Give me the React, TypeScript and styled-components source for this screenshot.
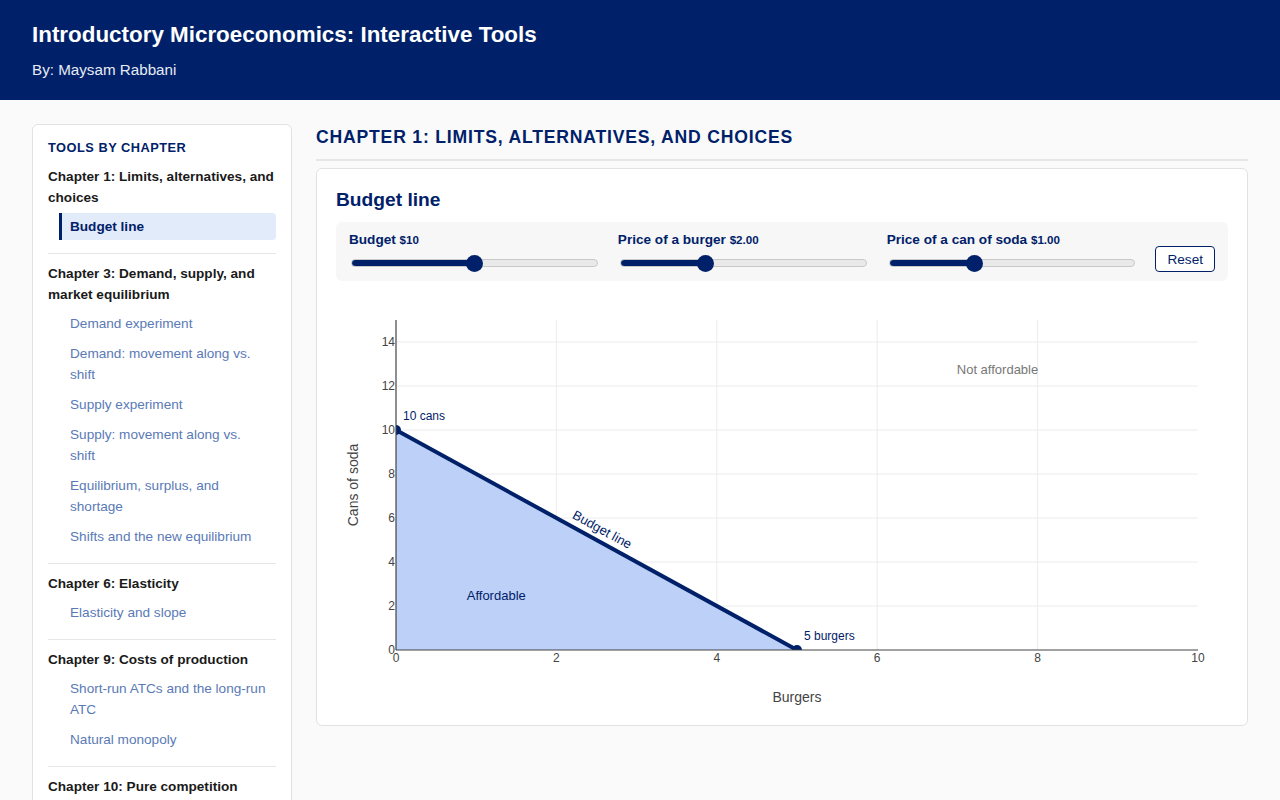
import React, { useState } from "react";
import styled, { createGlobalStyle } from "styled-components";

const NAVY = "#002169";

const GlobalStyle = createGlobalStyle`
  html, body {
    margin: 0;
    padding: 0;
    background: #fafafa;
    font-family: "Liberation Sans", Arial, sans-serif;
    color: #1a1a1a;
  }
  * { box-sizing: border-box; }
`;

const chapters = [
  {
    title: "Chapter 1: Limits, alternatives, and choices",
    tools: ["Budget line"],
  },
  {
    title: "Chapter 3: Demand, supply, and market equilibrium",
    tools: [
      "Demand experiment",
      "Demand: movement along vs. shift",
      "Supply experiment",
      "Supply: movement along vs. shift",
      "Equilibrium, surplus, and shortage",
      "Shifts and the new equilibrium",
    ],
  },
  { title: "Chapter 6: Elasticity", tools: ["Elasticity and slope"] },
  {
    title: "Chapter 9: Costs of production",
    tools: ["Short-run ATCs and the long-run ATC", "Natural monopoly"],
  },
  {
    title: "Chapter 10: Pure competition",
    tools: ["Profit maximization", "Short-run supply"],
  },
];

const DEFAULTS = { budget: 10, burger: 2, soda: 1 };

const App = () => {
  const [budget, setBudget] = useState(DEFAULTS.budget);
  const [burger, setBurger] = useState(DEFAULTS.burger);
  const [soda, setSoda] = useState(DEFAULTS.soda);

  const reset = () => {
    setBudget(DEFAULTS.budget);
    setBurger(DEFAULTS.burger);
    setSoda(DEFAULTS.soda);
  };

  return (
    <>
      <GlobalStyle />
      <Header>
        <SiteTitle>Introductory Microeconomics: Interactive Tools</SiteTitle>
        <Byline>By: Maysam Rabbani</Byline>
      </Header>
      <Layout>
        <Sidebar>
          <SidebarTitle>Tools by chapter</SidebarTitle>
          {chapters.map((ch) => (
            <ChapterGroup key={ch.title}>
              <ChapterName>{ch.title}</ChapterName>
              <ToolList>
                {ch.tools.map((t) => (
                  <ToolLink key={t} $active={t === "Budget line"}>
                    {t}
                  </ToolLink>
                ))}
              </ToolList>
            </ChapterGroup>
          ))}
        </Sidebar>
        <Main>
          <ChapterHeading>Chapter 1: Limits, alternatives, and choices</ChapterHeading>
          <Card>
            <CardTitle>Budget line</CardTitle>
            <Controls>
              <Slider
                label="Budget"
                display={`$${budget}`}
                min={0}
                max={20}
                step={1}
                value={budget}
                onChange={setBudget}
              />
              <Slider
                label="Price of a burger"
                display={`$${burger.toFixed(2)}`}
                min={0.5}
                max={5}
                step={0.25}
                value={burger}
                onChange={setBurger}
              />
              <Slider
                label="Price of a can of soda"
                display={`$${soda.toFixed(2)}`}
                min={0.25}
                max={2.5}
                step={0.25}
                value={soda}
                onChange={setSoda}
              />
              <ResetButton onClick={reset}>Reset</ResetButton>
            </Controls>
            <BudgetChart budget={budget} burger={burger} soda={soda} />
          </Card>
        </Main>
      </Layout>
    </>
  );
};

export default App;

type SliderProps = {
  label: string;
  display: string;
  min: number;
  max: number;
  step: number;
  value: number;
  onChange: (v: number) => void;
};

const Slider = ({ label, display, min, max, step, value, onChange }: SliderProps) => {
  const pct = (value - min) / (max - min);
  const stop = `calc(8.5px + ${pct} * (100% - 17px))`;
  return (
    <SliderField>
      <SliderLabel>
        {label} <SliderValue>{display}</SliderValue>
      </SliderLabel>
      <Range
        type="range"
        min={min}
        max={max}
        step={step}
        value={value}
        onChange={(e) => onChange(Number(e.target.value))}
        style={{
          background: `linear-gradient(to right, ${NAVY} ${stop}, #e9e9e9 ${stop})`,
        }}
      />
    </SliderField>
  );
};

const W = 892;
const H = 420;
const L = 60;
const R = 862;
const T = 24;
const B = 354;

const BudgetChart = ({ budget, burger, soda }: { budget: number; burger: number; soda: number }) => {
  const qB = budget / burger;
  const qS = budget / soda;
  const xMax = Math.max(10, Math.ceil(qB / 2) * 2);
  const yMax = Math.max(15, Math.ceil(qS / 3) * 3);
  const sx = (x: number) => L + (x / xMax) * (R - L);
  const sy = (y: number) => B - (y / yMax) * (B - T);

  const xTicks: number[] = [];
  for (let i = 0; i <= xMax; i += xMax > 20 ? 10 : 2) xTicks.push(i);
  const yTicks: number[] = [];
  for (let i = 0; i < yMax; i += yMax > 30 ? 10 : 2) yTicks.push(i);

  const x0 = sx(0);
  const y0 = sy(qS);
  const x1 = sx(qB);
  const y1 = sy(0);
  const angle = (Math.atan2(y1 - y0, x1 - x0) * 180) / Math.PI;
  const rad = (angle * Math.PI) / 180;
  const mx = (x0 + x1) / 2 + Math.sin(rad) * 12;
  const my = (y0 + y1) / 2 - Math.cos(rad) * 12;

  return (
    <ChartSvg viewBox={`0 0 ${W} ${H}`}>
      <defs>
        <clipPath id="plot-area">
          <rect x={L} y={T} width={R - L} height={B - T} />
        </clipPath>
      </defs>
      {xTicks.slice(1, -1).map((t) => (
        <line key={`gx${t}`} x1={sx(t)} x2={sx(t)} y1={T} y2={B} stroke="#ececec" />
      ))}
      {yTicks.slice(1).map((t) => (
        <line key={`gy${t}`} x1={L} x2={R} y1={sy(t)} y2={sy(t)} stroke="#ececec" />
      ))}
      <g clipPath="url(#plot-area)">
        <polygon points={`${x0},${y1} ${x0},${y0} ${x1},${y1}`} fill="#bdd0f7" />
        <line x1={x0} y1={y0} x2={x1} y2={y1} stroke={NAVY} strokeWidth={4} />
        <circle cx={x0} cy={y0} r={5} fill={NAVY} />
        <circle cx={x1} cy={y1} r={5} fill={NAVY} />
      </g>
      <line x1={L} x2={L} y1={T} y2={B} stroke="#444" strokeWidth={1.2} />
      <line x1={L} x2={R} y1={B} y2={B} stroke="#444" strokeWidth={1.2} />
      {yTicks.map((t) => (
        <TickText key={`ty${t}`} x={L - 1} y={sy(t)} dy="0.35em" textAnchor="end">
          {t}
        </TickText>
      ))}
      {xTicks.map((t) => (
        <TickText key={`tx${t}`} x={sx(t)} y={B + 8} dy="0.35em" textAnchor="middle">
          {t}
        </TickText>
      ))}
      <AxisTitle x={17} y={(T + B) / 2} textAnchor="middle" dy="0.35em" transform={`rotate(-90 17 ${(T + B) / 2})`}>
        Cans of soda
      </AxisTitle>
      <AxisTitle x={(L + R) / 2} y={401} textAnchor="middle" dy="0.35em">
        Burgers
      </AxisTitle>
      <PointLabel x={x0 + 7} y={y0 - 14} dy="0.35em">
        {Math.round(qS * 100) / 100} cans
      </PointLabel>
      <PointLabel x={x1 + 7} y={y1 - 14} dy="0.35em">
        {Math.round(qB * 100) / 100} burgers
      </PointLabel>
      <RegionLabel x={sx(qB / 4)} y={sy(qS / 4)} dy="0.35em" textAnchor="middle">
        Affordable
      </RegionLabel>
      <RegionLabel $muted x={sx(xMax * 0.75)} y={sy(yMax * 0.85)} dy="0.35em" textAnchor="middle">
        Not affordable
      </RegionLabel>
      <RegionLabel x={mx} y={my} dy="0.35em" textAnchor="middle" transform={`rotate(${angle} ${mx} ${my})`}>
        Budget line
      </RegionLabel>
    </ChartSvg>
  );
};

const Header = styled.header`
  background: ${NAVY};
  color: #fff;
  padding: 22px 32px 21px;
`;

const SiteTitle = styled.h1`
  margin: 0;
  font-size: 22.4px;
  line-height: 26px;
  font-weight: 700;
`;

const Byline = styled.div`
  margin-top: 13px;
  font-size: 15.2px;
  line-height: 18px;
  color: #e6ebf5;
`;

const Layout = styled.div`
  display: grid;
  grid-template-columns: 260px 1fr;
  gap: 24px;
  align-items: start;
  padding: 24px 32px;
`;

const Sidebar = styled.nav`
  background: #fff;
  border: 1px solid #e2e2e2;
  border-radius: 6px;
  padding: 15px 15px 16px;
`;

const SidebarTitle = styled.div`
  font-size: 12.8px;
  line-height: 16px;
  font-weight: 700;
  text-transform: uppercase;
  letter-spacing: 0.5px;
  color: ${NAVY};
  margin-bottom: 10px;
`;

const ChapterGroup = styled.div`
  padding-bottom: 12px;
  margin-bottom: 9px;
  border-bottom: 1px solid #e6e6e6;

  &:last-child {
    border-bottom: none;
    margin-bottom: 0;
  }
`;

const ChapterName = styled.div`
  font-size: 13.6px;
  line-height: 21px;
  font-weight: 700;
  color: #1a1a1a;
  margin-bottom: 3px;
`;

const ToolList = styled.div`
  display: flex;
  flex-direction: column;
  margin-left: 11px;
`;

const ToolLink = styled.a<{ $active?: boolean }>`
  display: block;
  margin: 1.5px 0;
  padding: 3px 8px 3px 8px;
  border-left: 3px solid ${({ $active }) => ($active ? NAVY : "transparent")};
  border-radius: 0 4px 4px 0;
  background: ${({ $active }) => ($active ? "#e2ebfa" : "transparent")};
  font-size: 13.6px;
  line-height: 21px;
  font-weight: ${({ $active }) => ($active ? 700 : 400)};
  color: ${({ $active }) => ($active ? NAVY : "#5a7ab6")};
  cursor: pointer;
`;

const Main = styled.main`
  min-width: 0;
`;

const ChapterHeading = styled.h2`
  margin: 0 0 7px;
  padding: 2px 0 11px;
  border-bottom: 2px solid #e6e6e6;
  font-size: 17.6px;
  line-height: 22px;
  font-weight: 700;
  text-transform: uppercase;
  letter-spacing: 0.8px;
  color: ${NAVY};
`;

const Card = styled.section`
  background: #fff;
  border: 1px solid #e2e2e2;
  border-radius: 6px;
  padding: 19px 19px 9px;
`;

const CardTitle = styled.h3`
  margin: 0 0 11px;
  font-size: 19.2px;
  line-height: 23px;
  font-weight: 700;
  color: ${NAVY};
`;

const Controls = styled.div`
  display: grid;
  grid-template-columns: repeat(3, 1fr) auto;
  gap: 18px;
  align-items: end;
  background: #f7f7f7;
  border-radius: 6px;
  padding: 10px 13px 9px;
`;

const SliderField = styled.label`
  display: flex;
  flex-direction: column;
  gap: 6px;
`;

const SliderLabel = styled.span`
  font-size: 13.6px;
  line-height: 16px;
  font-weight: 700;
  color: ${NAVY};
`;

const SliderValue = styled.span`
  font-size: 11.6px;
`;

const Range = styled.input`
  -webkit-appearance: none;
  appearance: none;
  width: calc(100% - 4px);
  height: 8px;
  margin: 5px 2px;
  border: 1px solid #c9c9c9;
  border-radius: 4px;
  outline: none;

  &::-webkit-slider-thumb {
    -webkit-appearance: none;
    appearance: none;
    width: 17px;
    height: 17px;
    border-radius: 50%;
    background: ${NAVY};
    cursor: pointer;
  }
`;

const ResetButton = styled.button`
  height: 26px;
  margin-bottom: 0;
  padding: 0 11px;
  border: 1px solid ${NAVY};
  border-radius: 4px;
  background: #fff;
  color: ${NAVY};
  font-family: "Liberation Sans", Arial, sans-serif;
  font-size: 13.6px;
  cursor: pointer;
`;

const ChartSvg = styled.svg`
  display: block;
  width: 100%;
  height: auto;
  margin-top: 15px;
  font-family: "Liberation Sans", Arial, sans-serif;
`;

const TickText = styled.text`
  font-size: 12px;
  fill: #444;
`;

const AxisTitle = styled.text`
  font-size: 14px;
  fill: #444;
`;

const PointLabel = styled.text`
  font-size: 12px;
  fill: ${NAVY};
`;

const RegionLabel = styled.text<{ $muted?: boolean }>`
  font-size: 13px;
  fill: ${({ $muted }) => ($muted ? "#777" : NAVY)};
`;
